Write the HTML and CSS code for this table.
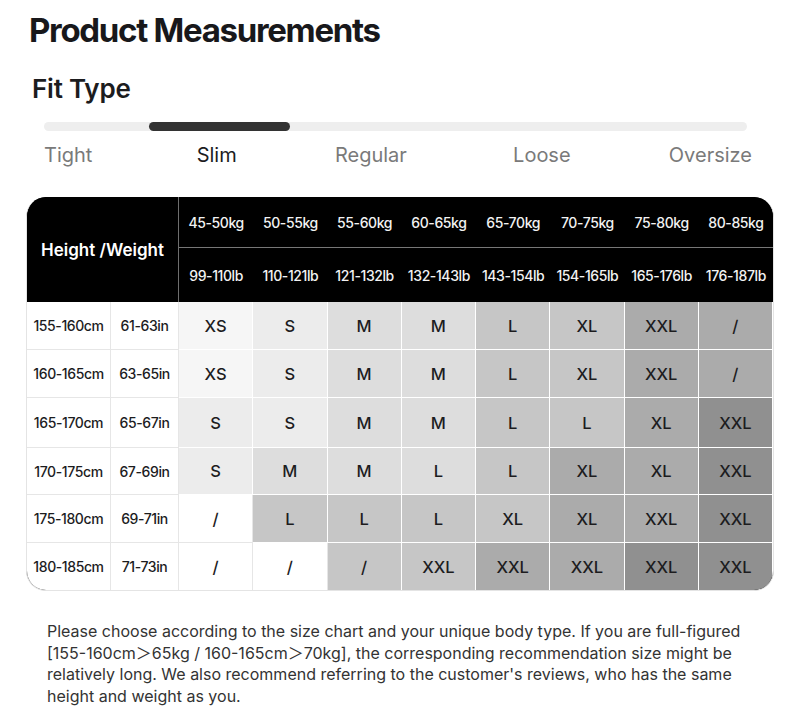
FILE: index.html
```html
<!DOCTYPE html>
<html lang="en">
<head>
<meta charset="utf-8">
<title>Product Measurements</title>
<link rel="stylesheet" href="styles.css">
</head>
<body>
<h1 class="title">Product Measurements</h1>
<h2 class="fit-title">Fit Type</h2>
<div class="track"><div class="thumb"></div></div>
<div class="fit-labels">
  <span>Tight</span>
  <span class="active">Slim</span>
  <span>Regular</span>
  <span>Loose</span>
  <span>Oversize</span>
</div>

<div class="chart">
  <div class="hw">Height /Weight</div>
  <div class="kg">45-50kg</div><div class="kg">50-55kg</div><div class="kg">55-60kg</div><div class="kg">60-65kg</div><div class="kg">65-70kg</div><div class="kg">70-75kg</div><div class="kg">75-80kg</div><div class="kg">80-85kg</div>
  <div class="lb">99-110lb</div><div class="lb">110-121lb</div><div class="lb">121-132lb</div><div class="lb">132-143lb</div><div class="lb">143-154lb</div><div class="lb">154-165lb</div><div class="lb">165-176lb</div><div class="lb">176-187lb</div>

  <div class="h">155-160cm</div><div class="h in">61-63in</div>
  <div class="s c1">XS</div><div class="s c2">S</div><div class="s c3">M</div><div class="s c3">M</div><div class="s c4">L</div><div class="s c4">XL</div><div class="s c5">XXL</div><div class="s c5">/</div>

  <div class="h">160-165cm</div><div class="h in">63-65in</div>
  <div class="s c1">XS</div><div class="s c2">S</div><div class="s c3">M</div><div class="s c3">M</div><div class="s c4">L</div><div class="s c4">XL</div><div class="s c5">XXL</div><div class="s c5">/</div>

  <div class="h">165-170cm</div><div class="h in">65-67in</div>
  <div class="s c2">S</div><div class="s c2">S</div><div class="s c3">M</div><div class="s c3">M</div><div class="s c4">L</div><div class="s c4">L</div><div class="s c5">XL</div><div class="s c6">XXL</div>

  <div class="h">170-175cm</div><div class="h in">67-69in</div>
  <div class="s c2">S</div><div class="s c3">M</div><div class="s c3">M</div><div class="s c3">L</div><div class="s c4">L</div><div class="s c5">XL</div><div class="s c5">XL</div><div class="s c6">XXL</div>

  <div class="h">175-180cm</div><div class="h in">69-71in</div>
  <div class="s c0">/</div><div class="s c4">L</div><div class="s c4">L</div><div class="s c4">L</div><div class="s c4">XL</div><div class="s c5">XL</div><div class="s c5">XXL</div><div class="s c6">XXL</div>

  <div class="h last">180-185cm</div><div class="h in last">71-73in</div>
  <div class="s c0 last">/</div><div class="s c0 last">/</div><div class="s c4 last">/</div><div class="s c4 last">XXL</div><div class="s c5 last">XXL</div><div class="s c5 last">XXL</div><div class="s c6 last">XXL</div><div class="s c6 last">XXL</div>
</div>

<p class="note">Please choose according to the size chart and your unique body type. If you are full-figured [155-160cm＞65kg / 160-165cm＞70kg], the corresponding recommendation size might be relatively long. We also recommend referring to the customer's reviews, who has the same height and weight as you.</p>
</body>
</html>
```

FILE: styles.css
```css
* { box-sizing: border-box; }

body {
  margin: 0;
  background: #ffffff;
  font-family: Inter, "Noto Sans", "Liberation Sans", sans-serif;
  color: #1c1c1e;
}

.title {
  margin: 0;
  padding: 10px 0 0 29px;
  font-size: 33px;
  line-height: 40px;
  font-weight: 700;
  letter-spacing: -1.3px;
  color: #18181b;
}

.fit-title {
  margin: 23px 0 0 32px;
  font-size: 26px;
  line-height: 32px;
  font-weight: 600;
  letter-spacing: -0.2px;
  color: #1c1c1e;
}

.track {
  display: flex;
  margin: 17px 53px 0 44px;
  height: 9px;
  border-radius: 5px;
  background: #eeeeee;
}

.thumb {
  margin-left: 105px;
  width: 141px;
  height: 9px;
  border-radius: 5px;
  background: #333333;
}

.fit-labels {
  display: flex;
  justify-content: space-between;
  margin: 12px 48px 0 44px;
  font-size: 20px;
  line-height: 24px;
  color: #7a7a7a;
}

.fit-labels span:nth-child(2) { margin-left: 6px; }
.fit-labels span:nth-child(3) { margin-right: 8px; }

.fit-labels .active { color: #1c1c1e; }

.chart {
  display: grid;
  grid-template-columns: 84px 68px repeat(8, 1fr);
  grid-template-rows: 51px 54px 48px 48px 50px 47px 48px 47px;
  margin: 30px 0 0 26px;
  width: 748px;
  border: 1px solid #e4e4e4;
  border-top: none;
  border-radius: 20px;
  overflow: hidden;
  background: #000;
}

.chart > div {
  display: flex;
  align-items: center;
  justify-content: center;
}

.hw {
  grid-column: 1 / span 2;
  grid-row: 1 / span 2;
  background: #000;
  color: #fff;
  font-size: 17px;
  font-weight: 600;
  border-right: 1px solid #6e6e6e;
}

.kg, .lb {
  background: #000;
  color: #f2f2f2;
  font-size: 14px;
  font-weight: 500;
  letter-spacing: -0.4px;
}

.kg { border-bottom: 1px solid #777777; }

.h {
  background: #fff;
  color: #1c1c1e;
  font-size: 14px;
  font-weight: 500;
  letter-spacing: -0.4px;
  border-right: 1px solid #e6e6e6;
  border-bottom: 1px solid #e6e6e6;
}

.s {
  color: #1c1c1e;
  font-size: 16.5px;
  font-weight: 500;
  border-right: 1px solid #ffffff;
  border-bottom: 1px solid #ffffff;
}

.s.c0 { border-right-color: #e6e6e6; border-bottom-color: #e6e6e6; }

.last { border-bottom: none !important; }

.c0 { background: #ffffff; }
.c1 { background: #f6f6f6; }
.c2 { background: #ececec; }
.c3 { background: #dddddd; }
.c4 { background: #c6c6c6; }
.c5 { background: #ababab; }
.c6 { background: #909090; }

.note {
  margin: 30px 50px 0 47px;
  font-family: Inter, "Noto Sans CJK SC", sans-serif;
  font-size: 16px;
  line-height: 21.5px;
  color: #333333;
}
```
